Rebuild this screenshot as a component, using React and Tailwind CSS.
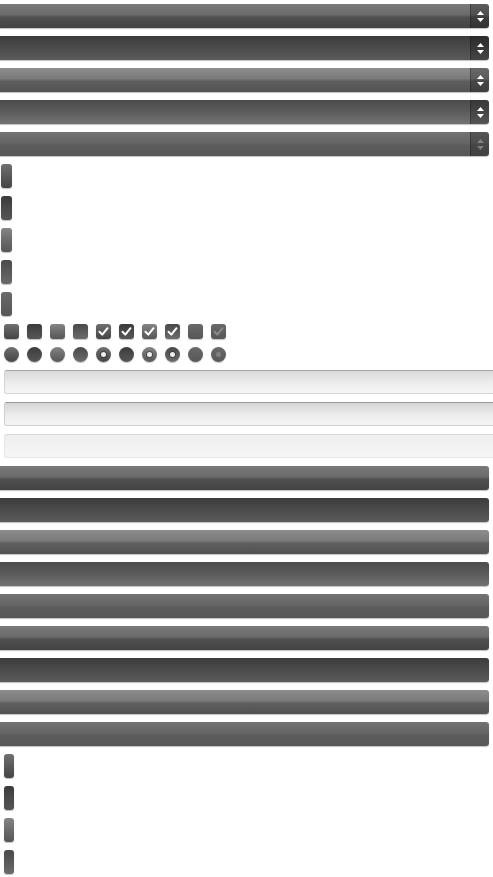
const skins = {
  glossy: "bg-[linear-gradient(to_bottom,#7a7a7a,#6b6b6b_44%,#505050_56%,#434343)]",
  dark: "bg-[linear-gradient(to_bottom,#3c3c3c,#454545_30%,#5b5b5b)]",
  light: "bg-[linear-gradient(to_bottom,#8d8d8d,#7a7a7a_44%,#5e5e5e_56%,#535353)]",
  sunken: "bg-[linear-gradient(to_bottom,#4b4b4b,#585858_40%,#727272)]",
  muted: "bg-[linear-gradient(to_bottom,#737373,#666666_44%,#5c5c5c_56%,#575757)]",
};

// smaller pieces read as a smooth blend rather than a hard gloss line
const tiny = {
  glossy: "bg-[linear-gradient(to_bottom,#707070,#5a5a5a_50%,#454545)]",
  dark: "bg-[linear-gradient(to_bottom,#3a3a3a,#4a4a4a_50%,#555555)]",
  light: "bg-[linear-gradient(to_bottom,#858585,#6c6c6c_50%,#575757)]",
  sunken: "bg-[linear-gradient(to_bottom,#4a4a4a,#5a5a5a_50%,#6c6c6c)]",
  muted: "bg-[linear-gradient(to_bottom,#6a6a6a,#606060_50%,#575757)]",
};

const drop = "shadow-[0_1px_1px_rgba(0,0,0,0.25)]";

function Arrows({ dim }) {
  return (
    <svg width="7" height="11" viewBox="0 0 7 11" className={dim ? "opacity-30" : ""}>
      <polygon points="0,4 3.5,0 7,4" fill="#fff" />
      <polygon points="0,7 7,7 3.5,11" fill="#fff" />
    </svg>
  );
}

function Select({ skin, disabled }) {
  return (
    <div className={`flex h-6 w-[489px] shrink-0 rounded-r-[3px] ${skins[skin]} ${drop}`}>
      <div className="flex-1" />
      <div className="flex w-[19px] items-center justify-center rounded-r-[3px] border-l border-black/25 bg-black/25">
        <Arrows dim={disabled} />
      </div>
    </div>
  );
}

function Bar({ skin }) {
  return <div className={`h-6 w-[489px] shrink-0 rounded-r-[3px] ${skins[skin]} ${drop}`} />;
}

function Nub({ skin, className }) {
  return <div className={`h-6 shrink-0 rounded-[3px] ${tiny[skin]} ${drop} ${className}`} />;
}

function Check({ skin, checked, disabled }) {
  return (
    <div className={`flex h-[15px] w-[15px] items-center justify-center rounded-[3px] ${tiny[skin]} ${drop}`}>
      {checked && (
        <svg width="15" height="15" viewBox="0 0 15 15">
          <polyline
            points="3.5,7.8 6.3,10.6 11.5,4.2"
            fill="none"
            stroke={disabled ? "#8a8a8a" : "#fff"}
            strokeWidth="2"
            strokeLinecap="round"
            strokeLinejoin="round"
          />
        </svg>
      )}
    </div>
  );
}

function Radio({ skin, checked, disabled }) {
  return (
    <div className={`flex h-[15px] w-[15px] items-center justify-center rounded-full ${tiny[skin]} ${drop}`}>
      {checked && (
        <div
          className={`h-[5px] w-[5px] rounded-full ${
            disabled ? "bg-[#808080]" : "bg-[#eeeeee] shadow-[0_0_0_1px_rgba(0,0,0,0.3)]"
          }`}
        />
      )}
    </div>
  );
}

function Field({ variant }) {
  const looks = {
    normal:
      "border-[#d4d4d4] border-t-[#a6a6a6] bg-[linear-gradient(to_bottom,#dadada,#ededed_55%,#f6f6f6)]",
    focus:
      "border-[#d0d0d0] border-t-[#989898] bg-[linear-gradient(to_bottom,#d6d6d6,#ececec_55%,#f5f5f5)]",
    off: "border-[#e6e6e6] border-t-[#d8d8d8] bg-[linear-gradient(to_bottom,#efefef,#f6f6f6)]",
  };
  return <div className={`ml-1 h-6 w-[520px] shrink-0 rounded-[3px] border ${looks[variant]}`} />;
}

const row = ["glossy", "dark", "light", "sunken"];

export default function App() {
  return (
    <div className="flex min-h-[877px] flex-col gap-2 overflow-hidden bg-white pt-1 font-['Liberation_Sans',sans-serif]">
      <Select skin="glossy" />
      <Select skin="dark" />
      <Select skin="light" />
      <Select skin="sunken" />
      <Select skin="muted" disabled />

      {[...row, "muted"].map((s) => (
        <Nub key={s} skin={s} className="ml-px w-[11px]" />
      ))}

      <div className="ml-1 flex gap-2">
        {row.map((s) => (
          <Check key={s} skin={s} />
        ))}
        {row.map((s) => (
          <Check key={"c" + s} skin={s} checked />
        ))}
        <Check skin="muted" />
        <Check skin="muted" checked disabled />
      </div>

      <div className="ml-1 flex gap-2">
        {row.map((s) => (
          <Radio key={s} skin={s} />
        ))}
        <Radio skin="glossy" checked />
        <Radio skin="dark" />
        <Radio skin="light" checked />
        <Radio skin="sunken" checked />
        <Radio skin="muted" />
        <Radio skin="muted" checked disabled />
      </div>

      <Field variant="normal" />
      <Field variant="focus" />
      <Field variant="off" />

      {[...row, "muted", ...row.slice(0, 3), "muted"].map((s, i) => (
        <Bar key={i} skin={s} />
      ))}

      {row.map((s) => (
        <Nub key={"b" + s} skin={s} className="ml-1 w-[10px]" />
      ))}
    </div>
  );
}
